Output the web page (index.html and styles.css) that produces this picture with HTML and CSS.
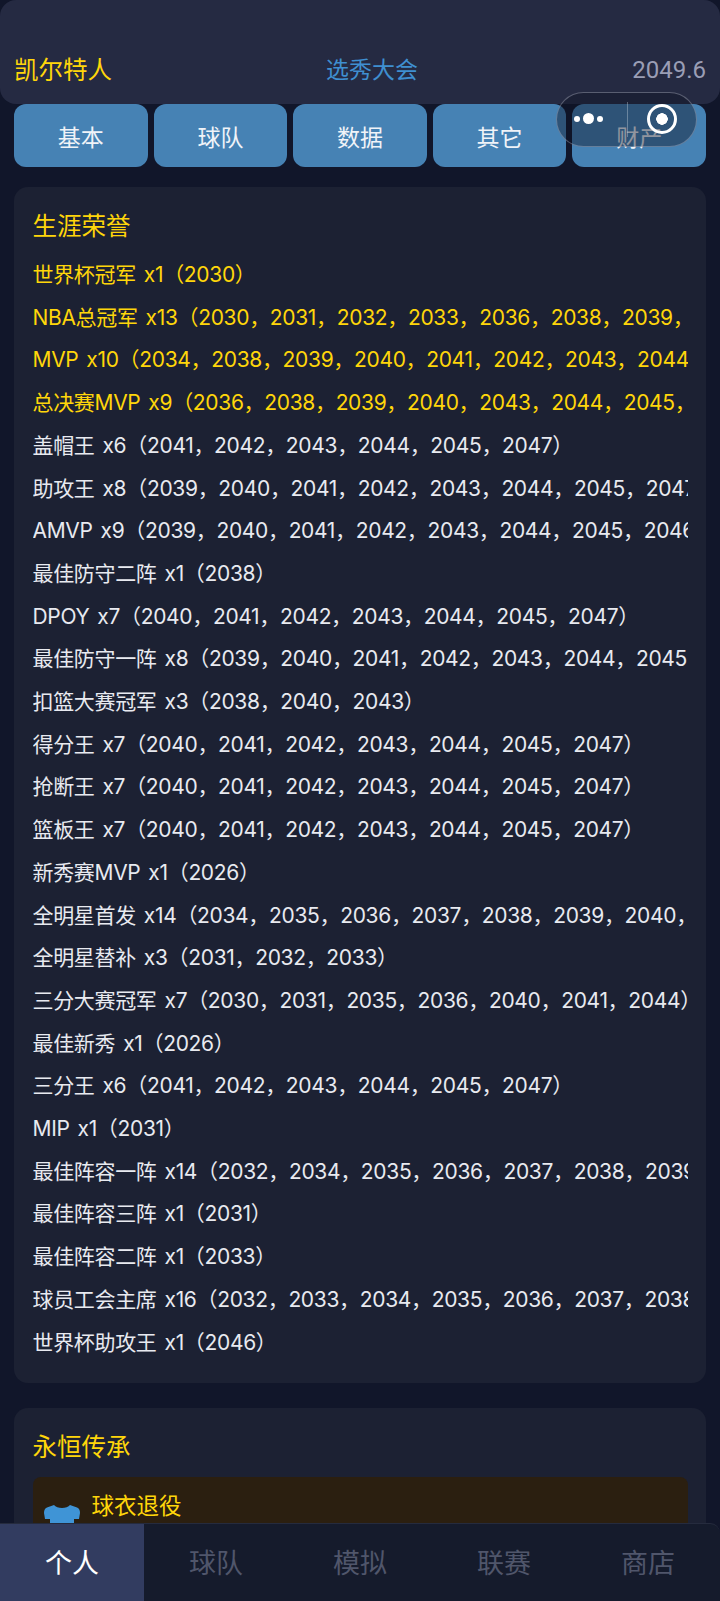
FILE: index.html
```html
<!DOCTYPE html>
<html lang="zh-CN">
<head>
<meta charset="utf-8">
<title>生涯荣誉</title>
<link rel="stylesheet" href="styles.css">
</head>
<body>
<div class="page">
  <header class="topbar">
    <span class="team">凯尔特人</span>
    <span class="event">选秀大会</span>
    <span class="date">2049.6</span>
  </header>
  <nav class="tabs">
    <div class="tab">基本</div>
    <div class="tab">球队</div>
    <div class="tab">数据</div>
    <div class="tab">其它</div>
    <div class="tab">财产</div>
  </nav>
  <section class="card">
    <h2 class="card-title">生涯荣誉</h2>
    <ul class="honors">
      <li class="gold">世界杯冠军 x1（2030）</li>
      <li class="gold">NBA总冠军 x13（2030，2031，2032，2033，2036，2038，2039，2040，2041）</li>
      <li class="gold">MVP x10（2034，2038，2039，2040，2041，2042，2043，2044，2045，2047）</li>
      <li class="gold">总决赛MVP x9（2036，2038，2039，2040，2043，2044，2045，2046，2047）</li>
      <li>盖帽王 x6（2041，2042，2043，2044，2045，2047）</li>
      <li>助攻王 x8（2039，2040，2041，2042，2043，2044，2045，2047）</li>
      <li>AMVP x9（2039，2040，2041，2042，2043，2044，2045，2046，2047）</li>
      <li>最佳防守二阵 x1（2038）</li>
      <li>DPOY x7（2040，2041，2042，2043，2044，2045，2047）</li>
      <li>最佳防守一阵 x8（2039，2040，2041，2042，2043，2044，2045，2047）</li>
      <li>扣篮大赛冠军 x3（2038，2040，2043）</li>
      <li>得分王 x7（2040，2041，2042，2043，2044，2045，2047）</li>
      <li>抢断王 x7（2040，2041，2042，2043，2044，2045，2047）</li>
      <li>篮板王 x7（2040，2041，2042，2043，2044，2045，2047）</li>
      <li>新秀赛MVP x1（2026）</li>
      <li>全明星首发 x14（2034，2035，2036，2037，2038，2039，2040，2041）</li>
      <li>全明星替补 x3（2031，2032，2033）</li>
      <li>三分大赛冠军 x7（2030，2031，2035，2036，2040，2041，2044）</li>
      <li>最佳新秀 x1（2026）</li>
      <li>三分王 x6（2041，2042，2043，2044，2045，2047）</li>
      <li>MIP x1（2031）</li>
      <li>最佳阵容一阵 x14（2032，2034，2035，2036，2037，2038，2039，2040）</li>
      <li>最佳阵容三阵 x1（2031）</li>
      <li>最佳阵容二阵 x1（2033）</li>
      <li>球员工会主席 x16（2032，2033，2034，2035，2036，2037，2038，2039）</li>
      <li>世界杯助攻王 x1（2046）</li>
    </ul>
  </section>
  <section class="card">
    <h2 class="card-title">永恒传承</h2>
    <div class="legacy">
      <svg class="shirt" viewBox="0 0 36 30" aria-hidden="true">
        <path d="M10 0 C13 4 23 4 26 0 L33 2.5 C35 3.5 36 5 36 8 L35 14 L30 14 L30 30 L6 30 L6 14 L1 14 L0 8 C0 5 1 3.5 3 2.5 Z"/>
      </svg>
      <div class="legacy-name">球衣退役</div>
    </div>
  </section>
</div>
<div class="capsule">
  <div class="capsule-dots"><i></i><b></b><i></i></div>
  <div class="capsule-line"></div>
  <div class="capsule-ring"></div>
</div>
<nav class="bottom">
  <div class="bottom-item active">个人</div>
  <div class="bottom-item">球队</div>
  <div class="bottom-item">模拟</div>
  <div class="bottom-item">联赛</div>
  <div class="bottom-item">商店</div>
</nav>
</body>
</html>
```
FILE: styles.css
```css
* { box-sizing: border-box; }
html, body {
  margin: 0;
  padding: 0;
  height: 1601px;
  overflow: hidden;
  background: #11162a;
}
body {
  font-family: Inter, "Noto Sans CJK SC", sans-serif;
  color: #e8eaf0;
}
.page { height: 1601px; overflow: hidden; }

.topbar {
  height: 104px;
  padding: 0 14px 17px 14px;
  display: flex;
  justify-content: space-between;
  align-items: flex-end;
  background: #252a42;
  border-radius: 16px;
  line-height: 34px;
}
.team { font-size: 24.5px; color: #ffd60a; }
.event { font-size: 23px; color: #3f8fd0; }
.date { font-family: Roboto, sans-serif; font-size: 24px; color: #9a9eb5; }

.tabs {
  display: flex;
  gap: 6px;
  padding: 0 14px;
  margin-bottom: 20px;
}
.tab {
  flex: 1;
  height: 63px;
  display: flex;
  align-items: center;
  justify-content: center;
  background: #4682b4;
  border-radius: 12px;
  font-size: 23px;
  color: #f0f3f8;
}

.card {
  margin: 0 14px 25px;
  padding: 19px 18.5px;
  background: #1c2133;
  border-radius: 14px;
}
.card-title {
  margin: 0 0 8px;
  font-size: 24.5px;
  font-weight: 400;
  line-height: 40px;
  color: #ffd60a;
}
.honors {
  margin: 0;
  padding: 0;
  list-style: none;
}
.honors li {
  font-size: 21px;
  line-height: 42.7px;
  letter-spacing: -0.33px;
  word-spacing: 2.4px;
  white-space: nowrap;
  overflow: hidden;
}
.honors .gold { color: #ffd60a; }

.legacy {
  display: flex;
  gap: 12px;
  margin-top: 10px;
  padding: 14px 11px;
  height: 120px;
  background: #2b1f10;
  border-radius: 8px;
}
.shirt { width: 36px; height: 30px; margin-top: 14px; flex: none; fill: #3f94d6; }
.legacy-name { font-size: 22.5px; line-height: 30px; color: #ffd60a; }

.capsule {
  position: fixed;
  left: 556px;
  top: 92px;
  width: 141px;
  height: 55px;
  border-radius: 28px;
  border: 1.5px solid rgba(205, 210, 225, 0.35);
  background: rgba(15, 20, 35, 0.42);
}
.capsule-dots {
  position: absolute;
  left: 17px;
  top: 20px;
  display: flex;
  align-items: center;
  gap: 3px;
}
.capsule-dots i { width: 6px; height: 6px; border-radius: 50%; background: #fff; }
.capsule-dots b { width: 11px; height: 11px; border-radius: 50%; background: #fff; }
.capsule-line {
  position: absolute;
  left: 70px;
  top: 9px;
  width: 1px;
  height: 35px;
  background: rgba(220, 225, 235, 0.35);
}
.capsule-ring {
  position: absolute;
  left: 90px;
  top: 11px;
  width: 30px;
  height: 30px;
  border-radius: 50%;
  border: 3.5px solid #fff;
  background: radial-gradient(circle, #fff 0 5.5px, transparent 6px);
}

.bottom {
  position: fixed;
  left: 0;
  right: 0;
  bottom: 0;
  height: 78px;
  padding-bottom: 3px;
  display: flex;
  background: #151b2c;
  border-top: 1px solid #252b3e;
  border-top-right-radius: 10px;
}
.bottom-item {
  flex: 1;
  display: flex;
  align-items: center;
  justify-content: center;
  font-size: 27px;
  color: #50566b;
}
.bottom-item.active { background: #323c60; color: #fff; margin-bottom: -3px; padding-bottom: 3px; }
```
